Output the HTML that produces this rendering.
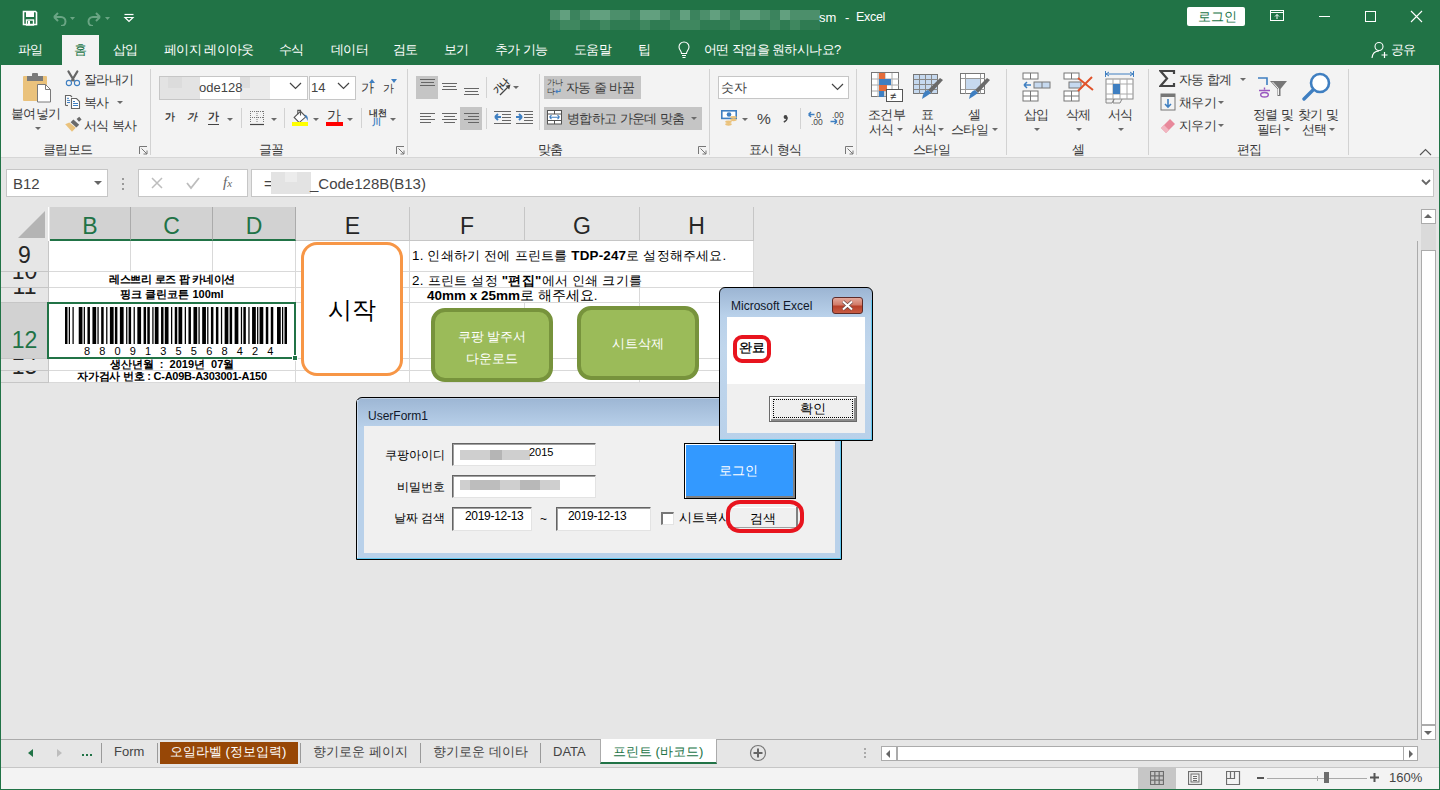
<!DOCTYPE html>
<html><head><meta charset="utf-8">
<style>
*{box-sizing:border-box;margin:0;padding:0}
html,body{width:1440px;height:790px;overflow:hidden;background:#e6e6e6;font-family:"Liberation Sans",sans-serif;font-size:12px;color:#444}
.a{position:absolute}
.t{position:absolute;white-space:nowrap;line-height:1}
#title{left:0;top:0;width:1440px;height:65px;background:#217346}
#ribbon{left:1px;top:65px;width:1438px;height:93px;background:#f3f3f3;border-bottom:1px solid #d6d6d6}
#fbar{left:1px;top:158px;width:1438px;height:49px;background:#e6e6e6}
.wt{color:#fff;font-size:13px;letter-spacing:-0.6px}
.sep{position:absolute;width:1px;background:#d2d2d2}
.grp{font-size:12px;color:#444}
.arr{position:absolute;width:0;height:0;border-left:3px solid transparent;border-right:3px solid transparent;border-top:3px solid #6a6a6a}
</style></head><body>
<div id="title" class="a"></div>
<!-- left/right/bottom window border -->
<div class="a" style="left:0;top:65px;width:1px;height:725px;background:#217346"></div>
<div class="a" style="left:1439px;top:65px;width:1px;height:725px;background:#217346"></div>
<div class="a" style="left:0;top:789px;width:1440px;height:1px;background:#217346"></div>

<!-- QAT -->
<svg class="a" style="left:22px;top:10px" width="16" height="16" viewBox="0 0 16 16"><path d="M1.5 1.5h12l1 1v12h-13z" fill="none" stroke="#fff" stroke-width="1.6"/><rect x="4" y="2" width="8" height="5" fill="#fff"/><rect x="4.5" y="10" width="7" height="5" fill="none" stroke="#fff" stroke-width="1.4"/><rect x="6" y="11" width="2" height="3" fill="#fff"/></svg>
<svg class="a" style="left:51px;top:10px" width="26" height="16" viewBox="0 0 26 16"><path d="M3 7 L7 3 M3 7 L7 11 M3 7 H10 A4.5 4.5 0 0 1 10 16" fill="none" stroke="#6aa584" stroke-width="2"/><path d="M19 7h5l-2.5 3z" fill="#6aa584"/></svg>
<svg class="a" style="left:86px;top:10px" width="26" height="16" viewBox="0 0 26 16"><path d="M14 7 L10 3 M14 7 L10 11 M14 7 H7 A4.5 4.5 0 0 0 7 16" fill="none" stroke="#6aa584" stroke-width="2"/><path d="M19 7h5l-2.5 3z" fill="#6aa584"/></svg>
<svg class="a" style="left:123px;top:12px" width="12" height="12" viewBox="0 0 12 12"><path d="M1.5 2.5h9" stroke="#fff" stroke-width="1.2"/><path d="M2 5.5 L6 9.5 L10 5.5 Z" fill="none" stroke="#fff" stroke-width="1.2"/></svg>
<!-- title text -->
<div class="a" style="left:550px;top:10px;width:10px;height:10px;background:#4c8f6b"></div>
<div class="a" style="left:550px;top:20px;width:10px;height:10px;background:#2f7b52"></div>
<div class="a" style="left:560px;top:10px;width:10px;height:10px;background:#62a07f"></div>
<div class="a" style="left:560px;top:20px;width:10px;height:10px;background:#3f875f"></div>
<div class="a" style="left:570px;top:10px;width:10px;height:10px;background:#3b835d"></div>
<div class="a" style="left:570px;top:20px;width:10px;height:10px;background:#3f875f"></div>
<div class="a" style="left:580px;top:10px;width:10px;height:10px;background:#4c8f6b"></div>
<div class="a" style="left:580px;top:20px;width:10px;height:10px;background:#2f7b52"></div>
<div class="a" style="left:590px;top:10px;width:10px;height:10px;background:#62a07f"></div>
<div class="a" style="left:590px;top:20px;width:10px;height:10px;background:#2f7b52"></div>
<div class="a" style="left:600px;top:10px;width:10px;height:10px;background:#62a07f"></div>
<div class="a" style="left:600px;top:20px;width:10px;height:10px;background:#3f875f"></div>
<div class="a" style="left:610px;top:10px;width:10px;height:10px;background:#4c8f6b"></div>
<div class="a" style="left:610px;top:20px;width:10px;height:10px;background:#2f7b52"></div>
<div class="a" style="left:620px;top:10px;width:10px;height:10px;background:#4c8f6b"></div>
<div class="a" style="left:620px;top:20px;width:10px;height:10px;background:#2f7b52"></div>
<div class="a" style="left:630px;top:10px;width:10px;height:10px;background:#3b835d"></div>
<div class="a" style="left:630px;top:20px;width:10px;height:10px;background:#2f7b52"></div>
<div class="a" style="left:640px;top:10px;width:10px;height:10px;background:#62a07f"></div>
<div class="a" style="left:640px;top:20px;width:10px;height:10px;background:#3f875f"></div>
<div class="a" style="left:650px;top:10px;width:10px;height:10px;background:#62a07f"></div>
<div class="a" style="left:650px;top:20px;width:10px;height:10px;background:#2f7b52"></div>
<div class="a" style="left:660px;top:10px;width:10px;height:10px;background:#4c8f6b"></div>
<div class="a" style="left:660px;top:20px;width:10px;height:10px;background:#2f7b52"></div>
<div class="a" style="left:670px;top:10px;width:10px;height:10px;background:#3b835d"></div>
<div class="a" style="left:670px;top:20px;width:10px;height:10px;background:#3f875f"></div>
<div class="a" style="left:680px;top:10px;width:10px;height:10px;background:#62a07f"></div>
<div class="a" style="left:680px;top:20px;width:10px;height:10px;background:#3f875f"></div>
<div class="a" style="left:690px;top:10px;width:10px;height:10px;background:#3b835d"></div>
<div class="a" style="left:690px;top:20px;width:10px;height:10px;background:#3f875f"></div>
<div class="a" style="left:700px;top:10px;width:10px;height:10px;background:#4c8f6b"></div>
<div class="a" style="left:700px;top:20px;width:10px;height:10px;background:#2f7b52"></div>
<div class="a" style="left:710px;top:10px;width:10px;height:10px;background:#62a07f"></div>
<div class="a" style="left:710px;top:20px;width:10px;height:10px;background:#2f7b52"></div>
<div class="a" style="left:720px;top:10px;width:10px;height:10px;background:#4c8f6b"></div>
<div class="a" style="left:720px;top:20px;width:10px;height:10px;background:#2f7b52"></div>
<div class="a" style="left:730px;top:10px;width:10px;height:10px;background:#3b835d"></div>
<div class="a" style="left:730px;top:20px;width:10px;height:10px;background:#3f875f"></div>
<div class="a" style="left:740px;top:10px;width:10px;height:10px;background:#62a07f"></div>
<div class="a" style="left:740px;top:20px;width:10px;height:10px;background:#2f7b52"></div>
<div class="a" style="left:750px;top:10px;width:10px;height:10px;background:#62a07f"></div>
<div class="a" style="left:750px;top:20px;width:10px;height:10px;background:#2f7b52"></div>
<div class="a" style="left:760px;top:10px;width:10px;height:10px;background:#4c8f6b"></div>
<div class="a" style="left:760px;top:20px;width:10px;height:10px;background:#2f7b52"></div>
<div class="a" style="left:770px;top:10px;width:10px;height:10px;background:#3b835d"></div>
<div class="a" style="left:770px;top:20px;width:10px;height:10px;background:#3f875f"></div>
<div class="a" style="left:780px;top:10px;width:10px;height:10px;background:#62a07f"></div>
<div class="a" style="left:780px;top:20px;width:10px;height:10px;background:#2f7b52"></div>
<div class="a" style="left:790px;top:10px;width:10px;height:10px;background:#4c8f6b"></div>
<div class="a" style="left:790px;top:20px;width:10px;height:10px;background:#3f875f"></div>
<div class="a" style="left:800px;top:10px;width:10px;height:10px;background:#4c8f6b"></div>
<div class="a" style="left:800px;top:20px;width:10px;height:10px;background:#2f7b52"></div>
<div class="a" style="left:810px;top:10px;width:10px;height:10px;background:#4c8f6b"></div>
<div class="a" style="left:810px;top:20px;width:10px;height:10px;background:#2f7b52"></div>
<div class="t" style="left:819px;top:11px;font-size:13px;color:#fff">sm</div><div class="t" style="left:845px;top:11px;font-size:13px;color:#fff">-</div><div class="t" style="left:856px;top:11px;font-size:12.5px;color:#fff;letter-spacing:-0.3px">Excel</div>
<!-- login -->
<div class="a" style="left:1187px;top:7px;width:58px;height:19px;background:#fff;border-radius:2px"></div>
<div class="t" style="left:1198px;top:10px;font-size:13px;color:#217346">로그인</div>
<svg class="a" style="left:1270px;top:10px" width="15" height="12" viewBox="0 0 15 12"><rect x="0.5" y="0.5" width="13" height="10" fill="none" stroke="#fff"/><path d="M1 2.5h12.5" stroke="#fff"/><path d="M7 9V4.5M5 6.5l2-2 2 2" fill="none" stroke="#fff"/></svg>
<div class="a" style="left:1319px;top:16px;width:11px;height:1px;background:#fff"></div>
<div class="a" style="left:1365px;top:11px;width:11px;height:11px;border:1px solid #fff"></div>
<svg class="a" style="left:1410px;top:10px" width="13" height="13" viewBox="0 0 13 13"><path d="M1 1L12 12M12 1L1 12" stroke="#fff" stroke-width="1.1"/></svg>
<!-- tabs -->
<div class="a" style="left:62px;top:35px;width:37px;height:30px;background:#f3f3f3"></div>
<div class="t wt" style="left:18px;top:43px">파일</div>
<div class="t" style="left:74px;top:43px;font-size:13px;color:#217346">홈</div>
<div class="t wt" style="left:113px;top:43px">삽입</div>
<div class="t wt" style="left:164px;top:43px">페이지 레이아웃</div>
<div class="t wt" style="left:279px;top:43px">수식</div>
<div class="t wt" style="left:331px;top:43px">데이터</div>
<div class="t wt" style="left:393px;top:43px">검토</div>
<div class="t wt" style="left:444px;top:43px">보기</div>
<div class="t wt" style="left:495px;top:43px">추가 기능</div>
<div class="t wt" style="left:574px;top:43px">도움말</div>
<div class="t wt" style="left:638px;top:43px">팁</div>
<svg class="a" style="left:677px;top:41px" width="14" height="18" viewBox="0 0 14 18"><path d="M4.5 12.5C4.5 10 2 9 2 6A5 5 0 0 1 12 6C12 9 9.5 10 9.5 12.5Z" fill="none" stroke="#fff" stroke-width="1.1"/><path d="M5 14.5h4M5.5 16.5h3" stroke="#fff" stroke-width="1.1"/></svg>
<div class="t wt" style="left:704px;top:43px">어떤 작업을 원하시나요?</div>
<svg class="a" style="left:1371px;top:41px" width="18" height="18" viewBox="0 0 18 18"><circle cx="8" cy="5.5" r="4" fill="none" stroke="#fff" stroke-width="1.1"/><path d="M1 17C1.5 12 4 10 8 10" fill="none" stroke="#fff" stroke-width="1.1"/><path d="M13.5 11v6M10.5 14h6" stroke="#fff" stroke-width="1.2"/></svg>
<div class="t wt" style="left:1391px;top:43px">공유</div>
<div id="ribbon" class="a"></div>

<!-- ===== RIBBON ===== -->
<style>
.rt{position:absolute;white-space:nowrap;line-height:1;font-size:13px;letter-spacing:-0.6px;color:#3a3a3a;margin-top:0px}
.lau{position:absolute;width:9px;height:9px}
</style>
<!-- separators -->
<div class="sep" style="left:150px;top:69px;height:86px"></div>
<div class="sep" style="left:407px;top:69px;height:86px"></div>
<div class="sep" style="left:709px;top:69px;height:86px"></div>
<div class="sep" style="left:856px;top:69px;height:86px"></div>
<div class="sep" style="left:1006px;top:69px;height:86px"></div>
<div class="sep" style="left:1148px;top:69px;height:86px"></div>
<div class="sep" style="left:1348px;top:69px;height:86px"></div>
<!-- launchers -->
<svg class="lau" style="left:139px;top:146px" viewBox="0 0 9 9"><path d="M0.5 8V0.5H8" fill="none" stroke="#777"/><path d="M2.5 2.5L8 8M8 4.5V8H4.5" fill="none" stroke="#777"/></svg>
<svg class="lau" style="left:396px;top:146px" viewBox="0 0 9 9"><path d="M0.5 8V0.5H8" fill="none" stroke="#777"/><path d="M2.5 2.5L8 8M8 4.5V8H4.5" fill="none" stroke="#777"/></svg>
<svg class="lau" style="left:698px;top:146px" viewBox="0 0 9 9"><path d="M0.5 8V0.5H8" fill="none" stroke="#777"/><path d="M2.5 2.5L8 8M8 4.5V8H4.5" fill="none" stroke="#777"/></svg>
<svg class="lau" style="left:845px;top:146px" viewBox="0 0 9 9"><path d="M0.5 8V0.5H8" fill="none" stroke="#777"/><path d="M2.5 2.5L8 8M8 4.5V8H4.5" fill="none" stroke="#777"/></svg>
<!-- group labels -->
<div class="rt" style="left:43px;top:143px">클립보드</div>
<div class="rt" style="left:259px;top:143px">글꼴</div>
<div class="rt" style="left:538px;top:143px">맞춤</div>
<div class="rt" style="left:749px;top:143px">표시 형식</div>
<div class="rt" style="left:913px;top:143px">스타일</div>
<div class="rt" style="left:1072px;top:143px">셀</div>
<div class="rt" style="left:1237px;top:143px">편집</div>
<svg class="a" style="left:1419px;top:148px" width="13" height="8" viewBox="0 0 13 8"><path d="M1 7L6.5 1.5L12 7" fill="none" stroke="#555" stroke-width="1.1"/></svg>

<!-- Clipboard -->
<svg class="a" style="left:22px;top:72px" width="31" height="31" viewBox="0 0 31 31">
<rect x="1" y="4" width="24" height="25" rx="1" fill="#eac27c"/>
<rect x="5" y="4" width="16" height="5" fill="#7a7a7a"/><rect x="10" y="1" width="6" height="4" rx="1" fill="#7a7a7a"/>
<path d="M15.5 12.5h8l5 5v12.5h-13z" fill="#fff" stroke="#7a7a7a"/><path d="M23.5 12.5v5h5" fill="none" stroke="#7a7a7a"/>
</svg>
<div class="rt" style="left:11px;top:107px">붙여넣기</div>
<div class="arr" style="left:35px;top:127px"></div>
<svg class="a" style="left:62px;top:68px" width="22" height="22" viewBox="0 0 22 22"><path d="M6.4 3.4L11.8 12.4M15.4 3.4L10 12.4" stroke="#666" stroke-width="2.1" stroke-linecap="round"/><circle cx="6.9" cy="15" r="2.6" fill="none" stroke="#3f7fc1" stroke-width="1.1"/><circle cx="15" cy="15" r="2.6" fill="none" stroke="#3f7fc1" stroke-width="1.1"/></svg>
<div class="rt" style="left:84px;top:73px">잘라내기</div>
<svg class="a" style="left:64px;top:94px" width="17" height="16" viewBox="0 0 17 16"><path d="M1.5 11.5V1.5H6.5L8 3" fill="#fff" stroke="#666" stroke-width="1.1"/><path d="M1.5 11.5H4" stroke="#666" stroke-width="1.1"/><path d="M3 4.3h2M3 6.4h3M3 8.5h3" stroke="#3f7fc1" stroke-width="1"/><path d="M7.5 4.5H12.5L15.5 7.5V14.5H7.5Z" fill="#fff" stroke="#666" stroke-width="1.1"/><path d="M9 7.5h2M9 9.5h5M9 11.5h5" stroke="#3f7fc1" stroke-width="1"/></svg>
<div class="rt" style="left:84px;top:96px">복사</div>
<div class="arr" style="left:117px;top:101px"></div>
<svg class="a" style="left:62px;top:114px" width="22" height="22" viewBox="0 0 22 22"><path d="M3.2 10.3L7.3 8.5L13.8 13.7L10 17.7Z" fill="#eac27c"/><path d="M8.6 8.2L11.4 5.6L17.2 10.8L14.4 13.4Z" fill="#6a6a6a"/><path d="M14.6 5L17.2 2.8L19.6 5.4L17 7.8Z" fill="#6a6a6a"/></svg>
<div class="rt" style="left:84px;top:119px">서식 복사</div>

<!-- Font group -->
<div class="a" style="left:159px;top:76px;width:149px;height:24px;background:#fff;border:1px solid #c6c6c6"></div>
<div class="a" style="left:160px;top:77px;width:40px;height:22px;background:#e3e3e3"></div>
<div class="a" style="left:168px;top:77px;width:14px;height:11px;background:#dcdcdc"></div>
<div class="a" style="left:240px;top:77px;width:30px;height:22px;background:#ebebeb"></div>
<div class="a" style="left:240px;top:77px;width:10px;height:11px;background:#dedede"></div>
<div class="t" style="left:199px;top:81px;font-size:13px;color:#444">ode128</div>
<svg class="a" style="left:289px;top:82px" width="13" height="8" viewBox="0 0 13 8"><path d="M1 1L6.5 6.5L12 1" fill="none" stroke="#444" stroke-width="1.2"/></svg>
<div class="a" style="left:309px;top:76px;width:47px;height:24px;background:#fff;border:1px solid #c6c6c6"></div>
<div class="t" style="left:311px;top:81px;font-size:13px;color:#444">14</div>
<svg class="a" style="left:337px;top:82px" width="13" height="8" viewBox="0 0 13 8"><path d="M1 1L6.5 6.5L12 1" fill="none" stroke="#444" stroke-width="1.2"/></svg>
<div class="rt" style="left:361px;top:81px;font-size:13px">가</div>
<svg class="a" style="left:369px;top:79px" width="6" height="4"><path d="M0 4L3 0L6 4Z" fill="#3f7fc1"/></svg>
<div class="rt" style="left:383px;top:83px;font-size:11px">가</div>
<svg class="a" style="left:391px;top:79px" width="6" height="4"><path d="M0 0L3 4L6 0Z" fill="#3f7fc1"/></svg>
<div class="rt" style="left:165px;top:112px;font-size:10px;font-weight:bold">가</div>
<div class="rt" style="left:187px;top:112px;font-size:10px;font-style:italic;font-weight:bold">가</div>
<div class="rt" style="left:208px;top:111px;font-size:11px;font-weight:bold">가</div>
<div class="a" style="left:208px;top:124px;width:11px;height:1px;background:#444"></div>
<div class="arr" style="left:227px;top:118px"></div>
<div class="sep" style="left:241px;top:108px;height:20px"></div>



<svg class="a" style="left:250px;top:110px" width="15" height="16" viewBox="0 0 15 16"><path d="M0.5 1v12M13.5 1v12M7 1v12M0 1.5h14M0 7.5h14" stroke="#777" stroke-dasharray="1 1"/><path d="M0 14.5h14" stroke="#444" stroke-width="1.2"/></svg><div class="arr" style="left:271px;top:118px"></div>
<div class="sep" style="left:284px;top:108px;height:20px"></div>
<svg class="a" style="left:288px;top:106px" width="24" height="24" viewBox="0 0 24 24"><path d="M6.2 11.4L12.5 5.3L17.8 10.8L11.2 16.6Z" fill="#fff" stroke="#555" stroke-width="1.1"/><path d="M9.8 8.2V4.4H12.5V9.6" fill="none" stroke="#555" stroke-width="1.1"/><path d="M16.5 8.5Q21 9.5 19.5 15Q18.5 12 17.5 11Z" fill="#3f7fc1"/><rect x="4" y="16" width="16" height="4" fill="#ffff00"/></svg>
<div class="arr" style="left:313px;top:118px"></div>
<div class="rt" style="left:327px;top:108px;font-size:14px">가</div>
<div class="a" style="left:326px;top:122px;width:17px;height:4px;background:#ff0000"></div>
<div class="arr" style="left:347px;top:118px"></div>
<div class="sep" style="left:361px;top:108px;height:20px"></div>
<div class="rt" style="left:369px;top:109px;font-size:9px;font-weight:bold;letter-spacing:-0.5px">내천</div>
<div class="t" style="left:372px;top:118px;font-size:9px;color:#3f7fc1;font-weight:bold">川</div>
<div class="arr" style="left:390px;top:118px"></div>

<!-- Alignment -->
<div class="a" style="left:416px;top:76px;width:22px;height:23px;background:#c5c5c5"></div>
<div class="a" style="left:460px;top:107px;width:22px;height:23px;background:#c5c5c5"></div><svg class="a" style="left:410px;top:70px" width="130" height="65"><path d="M10 9.5H25 M11 12.5H24 M10 15.5H25 M32 13.5H47 M33 16.5H46 M32 19.5H47 M54 18.5H69 M55 21.5H68 M54 24.5H69 M10 43.5H25 M32 43.5H47 M54 43.5H69 M10 46.5H21 M34 46.5H45 M58 46.5H69 M10 49.5H25 M32 49.5H47 M54 49.5H69 M10 52.5H21 M34 52.5H45 M58 52.5H69 M84 41.5H101 M84 53.5H101 M92 44.5H101 M92 47.5H101 M92 50.5H101 M106 41.5H123 M106 53.5H123 M114 44.5H123 M114 47.5H123 M114 50.5H123" stroke="#666" stroke-width="1.2"/>
<path d="M85 47h6M85 47l3-3M85 47l3 3" fill="none" stroke="#3f7fc1" stroke-width="2"/>
<path d="M106 47h6M112 47l-3-3M112 47l-3 3" fill="none" stroke="#3f7fc1" stroke-width="2"/></svg><div class="sep" style="left:486px;top:77px;height:21px"></div>
<div class="t" style="left:493px;top:82px;font-size:9px;color:#3a3a3a;transform:rotate(-45deg);transform-origin:50% 50%;font-weight:bold;letter-spacing:-0.5px">가나</div>
<svg class="a" style="left:498px;top:83px" width="14" height="14" viewBox="0 0 14 14"><path d="M2 12L11.5 2.5" stroke="#444" stroke-width="1.2"/><path d="M12.5 1.5L7.5 2.8L11.2 6.5Z" fill="#444"/></svg>
<div class="arr" style="left:513px;top:86px;border-left-width:3.5px;border-right-width:3.5px;border-top-width:3.5px"></div>
<div class="sep" style="left:539px;top:74px;height:56px"></div>
<div class="a" style="left:544px;top:76px;width:97px;height:23px;background:#c5c5c5"></div>
<div class="t" style="left:547px;top:78px;font-size:8px;color:#3a3a3a;line-height:9px;letter-spacing:-0.3px">가나<br>다<span style="color:#3f7fc1;font-weight:bold">↵</span></div>
<div class="rt" style="left:566px;top:81px">자동 줄 바꿈</div>




<div class="sep" style="left:486px;top:108px;height:21px"></div>


<div class="a" style="left:544px;top:107px;width:158px;height:23px;background:#c5c5c5"></div>
<svg class="a" style="left:547px;top:110px" width="16" height="16" viewBox="0 0 16 16"><rect x="0.5" y="0.5" width="14" height="13.5" fill="#fff" stroke="#555"/><path d="M1 4h14M1 10.5h14M7.5 0.5v3.5M7.5 10.5v3.5" stroke="#555"/><path d="M2.5 7.2h10M2.5 7.2l2-2M2.5 7.2l2 2M12.5 7.2l-2-2M12.5 7.2l-2 2" fill="none" stroke="#3f7fc1" stroke-width="1.1"/></svg>
<div class="rt" style="left:567px;top:112px">병합하고 가운데 맞춤</div>
<div class="arr" style="left:691px;top:117px"></div>

<!-- Number -->
<div class="a" style="left:718px;top:76px;width:131px;height:23px;background:#fff;border:1px solid #c6c6c6"></div>
<div class="t" style="left:721px;top:81px;font-size:13px;color:#444">숫자</div>
<svg class="a" style="left:831px;top:83px" width="13" height="8" viewBox="0 0 13 8"><path d="M1 1L6.5 6.5L12 1" fill="none" stroke="#444" stroke-width="1.2"/></svg>

<div class="arr" style="left:742px;top:118px"></div>


<div class="sep" style="left:800px;top:108px;height:21px"></div>
<svg class="a" style="left:716px;top:104px" width="140" height="28" viewBox="0 0 140 28">
<rect x="5.8" y="6.8" width="14.4" height="7.6" fill="#fff" stroke="#3f7fc1" stroke-width="1.6"/>
<circle cx="13" cy="10.5" r="2.3" fill="#3f7fc1"/>
<ellipse cx="17.5" cy="13.3" rx="3.3" ry="1.4" fill="#eac27c"/><ellipse cx="17.5" cy="15.8" rx="3.3" ry="1.4" fill="#eac27c"/>
<ellipse cx="12.5" cy="17.8" rx="3.3" ry="1.4" fill="#eac27c"/><ellipse cx="12.5" cy="20.3" rx="3.3" ry="1.4" fill="#eac27c"/>
<text x="41" y="20" font-family="Liberation Sans" font-size="15.5" fill="#444">%</text>
<circle cx="69.5" cy="13" r="1.9" fill="#444"/><path d="M71.2 13.2Q71.2 16.5 67.8 18" fill="none" stroke="#444" stroke-width="1.4"/>
<path d="M92.5 10.5h6M92.5 10.5l2.5-2.5M92.5 10.5l2.5 2.5" fill="none" stroke="#3f7fc1" stroke-width="1.5"/>
<text x="98" y="13.5" font-family="Liberation Sans" font-size="8.5" fill="#444">.0</text>
<text x="95" y="20.5" font-family="Liberation Sans" font-size="8.5" fill="#444">.00</text>
<text x="116" y="13.5" font-family="Liberation Sans" font-size="8.5" fill="#444">.00</text>
<path d="M114.5 17.5h6.5M121 17.5l-2.5-2.5M121 17.5l-2.5 2.5" fill="none" stroke="#3f7fc1" stroke-width="1.5"/>
<text x="120.5" y="20.5" font-family="Liberation Sans" font-size="8.5" fill="#444">.0</text>
</svg>



<!-- Styles -->
<svg class="a" style="left:871px;top:72px" width="33" height="31" viewBox="0 0 33 31">
<rect x="0.5" y="0.5" width="27" height="24" fill="#fff" stroke="#777"/>
<path d="M7 1v24M14 1v24M21 1v24M1 7h27M1 13h27M1 19h27" stroke="#aaa"/>
<rect x="8" y="1" width="6" height="6" fill="#e46c3a"/><rect x="8" y="7" width="12" height="6" fill="#3f7fc1"/><rect x="8" y="13" width="8" height="6" fill="#e46c3a"/><rect x="8" y="19" width="5" height="6" fill="#3f7fc1"/>
<rect x="15.5" y="17.5" width="16" height="12" fill="#fff" stroke="#555"/><text x="19" y="28" font-size="11" fill="#333">≠</text>
</svg>
<div class="rt" style="left:868px;top:108px">조건부</div>
<div class="rt" style="left:869px;top:123px">서식</div>
<div class="arr" style="left:897px;top:128px"></div>
<svg class="a" style="left:913px;top:72px" width="32" height="31" viewBox="0 0 32 31">
<rect x="0.5" y="2.5" width="24" height="19" fill="#c6d9ef" stroke="#777"/>
<path d="M6.5 3v19M12.5 3v19M18.5 3v19M1 7.5h24M1 12.5h24M1 17.5h24" stroke="#888"/>
<path d="M30 8L18 21L15 18L27 6Z" fill="#6a6a6a"/><path d="M15 18Q10 19 9 27Q14 24 18 21Z" fill="#3f7fc1"/>
</svg>
<div class="rt" style="left:921px;top:108px">표</div>
<div class="rt" style="left:912px;top:123px">서식</div>
<div class="arr" style="left:938px;top:128px"></div>
<svg class="a" style="left:960px;top:72px" width="32" height="31" viewBox="0 0 32 31">
<rect x="0.5" y="1.5" width="24" height="20" fill="#fff" stroke="#777"/>
<path d="M1 6.5h24M1 17.5h24M5.5 2v20M20.5 2v20" stroke="#999"/><rect x="6" y="7" width="14" height="10" fill="#c6d9ef"/>
<path d="M30 8L18 21L15 18L27 6Z" fill="#6a6a6a"/><path d="M15 18Q10 19 9 27Q14 24 18 21Z" fill="#3f7fc1"/>
</svg>
<div class="rt" style="left:968px;top:108px">셀</div>
<div class="rt" style="left:951px;top:123px">스타일</div>
<div class="arr" style="left:992px;top:128px"></div>

<!-- Cells -->
<svg class="a" style="left:1022px;top:72px" width="29" height="30" viewBox="0 0 29 30">
<rect x="1" y="1" width="15" height="6" fill="#fff" stroke="#777"/><path d="M8.5 1v6" stroke="#777"/>
<rect x="12" y="10" width="16" height="6" fill="#c6d9ef" stroke="#777"/><path d="M20 10v6" stroke="#777"/>
<path d="M2 13h7M2 13l3-3M2 13l3 3" fill="none" stroke="#3f7fc1" stroke-width="1.5"/>
<rect x="1" y="19" width="15" height="10" fill="#fff" stroke="#777"/><path d="M8.5 19v10M1 24h15" stroke="#777"/>
</svg>
<div class="rt" style="left:1024px;top:108px">삽입</div>
<div class="arr" style="left:1034px;top:128px"></div>
<svg class="a" style="left:1063px;top:72px" width="31" height="30" viewBox="0 0 31 30">
<rect x="1" y="1" width="15" height="6" fill="#fff" stroke="#777"/><path d="M8.5 1v6" stroke="#777"/>
<rect x="6" y="10" width="12" height="6" fill="#c6d9ef" stroke="#777"/>
<rect x="1" y="19" width="15" height="10" fill="#fff" stroke="#777"/><path d="M8.5 19v10M1 24h15" stroke="#777"/>
<path d="M15 6L30 18M29 5L15 19" stroke="#e0522a" stroke-width="2"/>
</svg>
<div class="rt" style="left:1066px;top:108px">삭제</div>
<div class="arr" style="left:1076px;top:128px"></div>
<svg class="a" style="left:1105px;top:71px" width="30" height="33" viewBox="0 0 30 33">
<path d="M1 3h27M1 3l3-2M1 3l3 2M28 3l-3-2M28 3l-3 2M0.5 0v6M28.5 0v6" fill="none" stroke="#3f7fc1"/>
<rect x="1" y="8" width="27" height="20" fill="#fff" stroke="#888"/>
<path d="M8 8v20M15 8v20M22 8v20M1 13h27M1 23h27" stroke="#aaa"/>
<rect x="8" y="13" width="7" height="10" fill="#3f7fc1"/>
<path d="M1 28v4h6l2-4M9 28l-1 4h7l2-4" fill="none" stroke="#888"/>
</svg>
<div class="rt" style="left:1108px;top:108px">서식</div>
<div class="arr" style="left:1118px;top:128px"></div>

<!-- Editing -->
<svg class="a" style="left:1159px;top:70px" width="17" height="17" viewBox="0 0 17 17"><path d="M15 4V1H1.5L8 8.5L1.5 16H15V13" fill="none" stroke="#444" stroke-width="2.2"/></svg>
<div class="rt" style="left:1179px;top:73px">자동 합계</div>
<div class="arr" style="left:1240px;top:78px"></div>
<svg class="a" style="left:1160px;top:93px" width="16" height="18" viewBox="0 0 16 18"><rect x="1" y="1" width="14" height="3" fill="#777"/><rect x="1" y="1" width="14" height="16" fill="none" stroke="#777"/><path d="M8 6v8M5 11l3 3 3-3" fill="none" stroke="#3f7fc1" stroke-width="1.6"/></svg>
<div class="rt" style="left:1179px;top:96px">채우기</div>
<div class="arr" style="left:1218px;top:101px"></div>
<svg class="a" style="left:1160px;top:117px" width="16" height="16" viewBox="0 0 16 16"><path d="M1 11L10 2L15 7L6 16Z" fill="#e8899b"/><path d="M1 11L4 8L9 13L6 16Z" fill="#f1b5c0"/></svg>
<div class="rt" style="left:1179px;top:119px">지우기</div>
<div class="arr" style="left:1218px;top:124px"></div>
<svg class="a" style="left:1252px;top:70px" width="40" height="30" viewBox="0 0 40 30"><path d="M6 8H15V15" fill="none" stroke="#3f7fc1" stroke-width="1.6"/><path d="M12.5 17.5v2M7 20.5h11" stroke="#9b59c0" stroke-width="1.4"/><ellipse cx="12.5" cy="24.7" rx="3.8" ry="2.3" fill="none" stroke="#9b59c0" stroke-width="1.5"/><path d="M18 11H35L28.5 19V26H25.5V19Z" fill="#777"/><path d="M20.5 12L26.5 18.5V25" fill="none" stroke="#fff" stroke-width="0.9"/></svg>
<div class="rt" style="left:1253px;top:108px">정렬 및</div>
<div class="rt" style="left:1257px;top:123px">필터</div>
<div class="arr" style="left:1284px;top:128px"></div>
<svg class="a" style="left:1302px;top:71px" width="31" height="31" viewBox="0 0 31 31"><circle cx="18" cy="12" r="9" fill="#fff" stroke="#3f7fc1" stroke-width="2.6"/><path d="M11 19L2 28" stroke="#3f7fc1" stroke-width="3.4" stroke-linecap="round"/></svg>
<div class="rt" style="left:1298px;top:108px">찾기 및</div>
<div class="rt" style="left:1302px;top:123px">선택</div>
<div class="arr" style="left:1329px;top:128px"></div>
<div id="fbar" class="a"></div>

<!-- ===== FORMULA BAR ===== -->
<div class="a" style="left:6px;top:169px;width:102px;height:28px;background:#fff;border:1px solid #c6c6c6"></div>
<div class="t" style="left:13px;top:176px;font-size:15px;color:#444">B12</div>
<div class="a" style="left:94px;top:181px;width:0;height:0;border-left:4px solid transparent;border-right:4px solid transparent;border-top:4px solid #666"></div>
<div class="a" style="left:122px;top:178px;width:2px;height:2px;background:#999"></div>
<div class="a" style="left:122px;top:183px;width:2px;height:2px;background:#999"></div>
<div class="a" style="left:122px;top:188px;width:2px;height:2px;background:#999"></div>
<div class="a" style="left:138px;top:169px;width:110px;height:28px;background:#fff;border:1px solid #c6c6c6"></div>
<svg class="a" style="left:150px;top:176px" width="14" height="14"><path d="M2 2L12 12M12 2L2 12" stroke="#bdbdbd" stroke-width="1.5"/></svg>
<svg class="a" style="left:185px;top:176px" width="16" height="14"><path d="M2 7L6 12L14 2" fill="none" stroke="#bdbdbd" stroke-width="1.8"/></svg>
<div class="t" style="left:223px;top:175px;font-family:'Liberation Serif',serif;font-style:italic;font-size:15px;color:#666">f<span style="font-size:11px">x</span></div>
<div class="a" style="left:251px;top:169px;width:1183px;height:28px;background:#fff;border:1px solid #c6c6c6"></div>
<div class="t" style="left:264px;top:176px;font-size:15px;color:#444">=</div>
<div class="a" style="left:271px;top:172px;width:40px;height:22px;background:#e3e3e3"></div>
<div class="a" style="left:285px;top:172px;width:12px;height:10px;background:#ececec"></div>
<div class="t" style="left:310px;top:176px;font-size:15px;color:#444">_Code128B(B13)</div>
<svg class="a" style="left:1421px;top:179px" width="10" height="7"><path d="M1 1L5 5L9 1" fill="none" stroke="#666" stroke-width="1.8"/></svg>

<!-- ===== SHEET ===== -->
<style>
.ch{position:absolute;top:207px;height:34px;padding-top:2px;background:#e6e6e6;border-right:1px solid #c6c6c6;border-bottom:1px solid #c6c6c6;text-align:center;font-size:23px;line-height:34px;color:#262626}
.ch.sel{background:#d2d2d2;color:#217346;border-right-color:#ababab;border-bottom:2px solid #217346}
.rh{position:absolute;left:1px;width:48px;background:#e6e6e6;border-right:1px solid #c6c6c6;border-bottom:1px solid #c6c6c6;overflow:hidden}
.rh span{position:absolute;left:0;width:47px;text-align:center;font-size:23px;line-height:23px;color:#262626}
.rh.sel{background:#d2d2d2}
.rh.sel span{color:#217346}
.gl{position:absolute;background:#d9d9d9}
.ct{position:absolute;white-space:nowrap;line-height:1;color:#000}
</style>
<div class="a" style="left:1px;top:207px;width:48px;height:34px;background:#e6e6e6;border-right:1px solid #fff"></div>
<svg class="a" style="left:18px;top:211px" width="28" height="28"><path d="M27 0V27H0Z" fill="#b4b4b4"/></svg>

<div class="ch sel" style="left:50px;width:81px">B</div>
<div class="ch sel" style="left:131px;width:82px">C</div>
<div class="ch sel" style="left:213px;width:83px">D</div>
<div class="ch" style="left:296px;width:114px">E</div>
<div class="ch" style="left:410px;width:115px">F</div>
<div class="ch" style="left:525px;width:115px">G</div>
<div class="ch" style="left:640px;width:114px">H</div>
<div class="a" style="left:49px;top:241px;width:705px;height:142px;background:#fff"></div>
<div class="gl" style="left:49px;top:271px;width:705px;height:1px"></div>
<div class="gl" style="left:49px;top:287px;width:705px;height:1px"></div>
<div class="gl" style="left:49px;top:302px;width:705px;height:1px"></div>
<div class="gl" style="left:49px;top:358px;width:705px;height:1px"></div>
<div class="gl" style="left:49px;top:370px;width:705px;height:1px"></div>
<div class="gl" style="left:49px;top:382px;width:705px;height:1px"></div>
<div class="gl" style="left:130px;top:241px;width:1px;height:30px"></div>
<div class="gl" style="left:212px;top:241px;width:1px;height:30px"></div>
<div class="gl" style="left:295px;top:241px;width:1px;height:142px"></div>
<div class="gl" style="left:409px;top:241px;width:1px;height:142px"></div>
<div class="gl" style="left:524px;top:302px;width:1px;height:81px"></div>
<div class="gl" style="left:639px;top:287px;width:1px;height:96px"></div>
<div class="gl" style="left:753px;top:241px;width:1px;height:142px"></div>
<div class="rh" style="top:241px;height:31px"><span style="top:3px">9</span></div>
<div class="rh" style="top:272px;height:16px"><span style="top:-12px">10</span></div>
<div class="rh" style="top:288px;height:15px"><span style="top:-13px">11</span></div>
<div class="rh sel" style="top:303px;height:56px"><span style="top:26px">12</span></div>
<div class="rh" style="top:359px;height:12px"><span style="top:-18px">14</span></div>
<div class="rh" style="top:371px;height:12px"><span style="top:-16px">15</span></div>

<div class="ct" style="left:49px;width:246px;text-align:center;top:274px;font-size:11px;font-weight:bold;letter-spacing:-0.3px">레스쁘리 로즈 팝 카네이션</div>
<div class="ct" style="left:49px;width:246px;text-align:center;top:289px;font-size:11px;font-weight:bold">핑크 클린코튼 100ml</div>
<svg class="a" style="left:65px;top:307px" width="222" height="37" viewBox="0 0 222 37"><path d="M0.00 0h2.49v37h-2.49z M3.74 0h1.25v37h-1.25z M7.48 0h1.25v37h-1.25z M13.72 0h3.74v37h-3.74z M18.71 0h1.25v37h-1.25z M22.45 0h2.49v37h-2.49z M27.44 0h3.74v37h-3.74z M32.43 0h1.25v37h-1.25z M36.17 0h2.49v37h-2.49z M41.16 0h1.25v37h-1.25z M44.90 0h3.74v37h-3.74z M49.89 0h2.49v37h-2.49z M54.88 0h3.74v37h-3.74z M61.11 0h1.25v37h-1.25z M63.61 0h2.49v37h-2.49z M68.60 0h1.25v37h-1.25z M72.34 0h3.74v37h-3.74z M78.57 0h2.49v37h-2.49z M82.31 0h2.49v37h-2.49z M87.30 0h1.25v37h-1.25z M89.80 0h3.74v37h-3.74z M96.03 0h2.49v37h-2.49z M99.78 0h3.74v37h-3.74z M106.01 0h1.25v37h-1.25z M109.75 0h2.49v37h-2.49z M113.49 0h3.74v37h-3.74z M119.73 0h1.25v37h-1.25z M123.47 0h2.49v37h-2.49z M128.46 0h3.74v37h-3.74z M133.45 0h1.25v37h-1.25z M137.19 0h3.74v37h-3.74z M142.18 0h1.25v37h-1.25z M145.92 0h2.49v37h-2.49z M150.91 0h2.49v37h-2.49z M155.90 0h1.25v37h-1.25z M159.64 0h3.74v37h-3.74z M164.63 0h2.49v37h-2.49z M169.62 0h3.74v37h-3.74z M175.85 0h1.25v37h-1.25z M178.35 0h2.49v37h-2.49z M183.34 0h1.25v37h-1.25z M187.08 0h3.74v37h-3.74z M192.07 0h1.25v37h-1.25z M194.56 0h3.74v37h-3.74z M200.80 0h2.49v37h-2.49z M205.79 0h2.49v37h-2.49z M212.02 0h3.74v37h-3.74z M217.01 0h1.25v37h-1.25z M219.51 0h2.49v37h-2.49z" fill="#000"/></svg>
<div class="ct" style="left:84px;top:346px;font-size:11px;letter-spacing:9.15px;color:#000">8809135568424</div>
<div class="ct" style="left:49px;width:246px;text-align:center;top:359px;font-size:11px;font-weight:bold">생산년월 &nbsp;: &nbsp;2019년 &nbsp;07월</div>
<div class="ct" style="left:49px;width:246px;text-align:center;top:371px;font-size:11px;font-weight:bold;letter-spacing:-0.25px">자가검사 번호 : C-A09B-A303001-A150</div>
<div class="a" style="left:47px;top:302px;width:249px;height:57px;border:2px solid #217346"></div>
<div class="a" style="left:292px;top:355px;width:6px;height:6px;background:#217346;border:1px solid #fff"></div>
<div class="ct" style="left:412px;top:249px;font-size:13.4px;letter-spacing:0.2px">1. 인쇄하기 전에 프린트를 <b>TDP-247</b>로 설정해주세요.</div>
<div class="ct" style="left:412px;top:274px;font-size:13.4px;letter-spacing:0.25px">2. 프린트 설정 <b>"편집"</b>에서 인쇄 크기를</div>
<div class="ct" style="left:427px;top:289px;font-size:13.5px"><b>40mm x 25mm</b>로 해주세요.</div>
<!-- shapes -->
<div class="a" style="left:301px;top:242px;width:102px;height:134px;border:3.5px solid #f79646;border-radius:16px;background:#fff"></div>
<div class="ct" style="left:301px;width:102px;text-align:center;top:298px;font-size:24px;color:#000">시작</div>
<div class="a" style="left:431px;top:308px;width:122px;height:74px;border:4px solid #77933c;border-radius:14px;background:#9bbb59"></div>
<div class="ct" style="left:431px;width:122px;text-align:center;top:326px;font-size:13px;color:#fff;line-height:22px">쿠팡 발주서<br>다운로드</div>
<div class="a" style="left:577px;top:306px;width:122px;height:74px;border:4px solid #77933c;border-radius:14px;background:#9bbb59"></div>
<div class="ct" style="left:577px;width:122px;text-align:center;top:337px;font-size:13px;color:#fff">시트삭제</div>



<!-- ===== SHEET FRAME / SCROLLBARS ===== -->
<div class="a" style="left:1417px;top:241px;width:1px;height:499px;background:#ababab"></div>
<div class="a" style="left:1px;top:739px;width:1417px;height:1px;background:#ababab"></div>
<div class="a" style="left:1421px;top:209px;width:15px;height:15px;background:#fff;border:1px solid #ababab"></div>
<div class="a" style="left:1424px;top:214px;width:0;height:0;border-left:4.5px solid transparent;border-right:4.5px solid transparent;border-bottom:4px solid #666"></div>
<div class="a" style="left:1421px;top:224px;width:15px;height:26px;background:#dadada"></div>
<div class="a" style="left:1421px;top:250px;width:15px;height:475px;background:#fff;border:1px solid #ababab"></div>
<div class="a" style="left:1421px;top:725px;width:15px;height:15px;background:#fff;border:1px solid #ababab"></div>
<div class="a" style="left:1424px;top:731px;width:0;height:0;border-left:4.5px solid transparent;border-right:4.5px solid transparent;border-top:4px solid #666"></div>
<!-- h scroll -->
<div class="a" style="left:881px;top:746px;width:16px;height:15px;background:#fff;border:1px solid #ababab"></div>
<div class="a" style="left:886px;top:750px;width:0;height:0;border-top:4px solid transparent;border-bottom:4px solid transparent;border-right:4px solid #666"></div>
<div class="a" style="left:897px;top:746px;width:507px;height:15px;background:#fff;border:1px solid #ababab"></div>
<div class="a" style="left:1403px;top:746px;width:15px;height:15px;background:#fff;border:1px solid #ababab"></div>
<div class="a" style="left:1409px;top:750px;width:0;height:0;border-top:4px solid transparent;border-bottom:4px solid transparent;border-left:4px solid #666"></div>
<div class="a" style="left:864px;top:748px;width:2px;height:2px;background:#aaa"></div>
<div class="a" style="left:864px;top:752px;width:2px;height:2px;background:#aaa"></div>
<div class="a" style="left:864px;top:756px;width:2px;height:2px;background:#aaa"></div>

<!-- ===== SHEET TABS ===== -->
<div class="a" style="left:1px;top:767px;width:1438px;height:1px;background:#c6c6c6"></div>
<div class="a" style="left:1px;top:768px;width:1438px;height:21px;background:#f3f3f3"></div>
<div class="a" style="left:28px;top:749px;width:0;height:0;border-top:4px solid transparent;border-bottom:4px solid transparent;border-right:5px solid #217346"></div>
<div class="a" style="left:57px;top:749px;width:0;height:0;border-top:4px solid transparent;border-bottom:4px solid transparent;border-left:5px solid #bdbdbd"></div>
<div class="a" style="left:82px;top:754px;width:2px;height:2px;background:#217346;box-shadow:4px 0 0 #217346,8px 0 0 #217346"></div>
<div class="a" style="left:101px;top:743px;width:1px;height:20px;background:#9a9a9a"></div>
<div class="t" style="left:114px;top:745px;font-size:13px;color:#444">Form</div>
<div class="a" style="left:157px;top:743px;width:1px;height:20px;background:#9a9a9a"></div>
<div class="a" style="left:160px;top:742px;width:138px;height:22px;background:#974706"></div>
<div class="t" style="left:170px;top:745px;font-size:13px;color:#fff">오일라벨 (정보입력)</div>
<div class="a" style="left:300px;top:743px;width:1px;height:20px;background:#9a9a9a"></div>
<div class="t" style="left:313px;top:745px;font-size:13px;color:#444">향기로운 페이지</div>
<div class="a" style="left:420px;top:743px;width:1px;height:20px;background:#9a9a9a"></div>
<div class="t" style="left:433px;top:745px;font-size:13px;color:#444">향기로운 데이타</div>
<div class="a" style="left:540px;top:743px;width:1px;height:20px;background:#9a9a9a"></div>
<div class="t" style="left:553px;top:745px;font-size:13px;color:#444">DATA</div>
<div class="a" style="left:600px;top:739px;width:117px;height:25px;background:#fff;border-left:1px solid #ababab;border-right:1px solid #ababab;border-bottom:2px solid #217346"></div>
<div class="t" style="left:613px;top:745px;font-size:13px;color:#217346">프린트 (바코드)</div>
<svg class="a" style="left:749px;top:744px" width="18" height="18"><circle cx="9" cy="9" r="7.5" fill="none" stroke="#777" stroke-width="1.2"/><path d="M9 4.5v9M4.5 9h9" stroke="#666" stroke-width="2"/></svg>

<!-- ===== STATUS BAR ===== -->
<div class="a" style="left:1138px;top:768px;width:38px;height:21px;background:#c6c6c6"></div>
<svg class="a" style="left:1150px;top:771px" width="14" height="14"><path d="M0.5 0.5h13v13h-13z M0.5 4.83h13 M0.5 9.17h13 M4.83 0.5v13 M9.17 0.5v13" fill="none" stroke="#6d6d6d" stroke-width="1.2"/></svg>
<svg class="a" style="left:1188px;top:771px" width="15" height="14"><rect x="0.5" y="0.5" width="13" height="13" fill="none" stroke="#6d6d6d" stroke-width="1.2"/><rect x="3" y="3" width="8" height="8" fill="none" stroke="#6d6d6d"/><path d="M5 5.5h4M5 7.5h4M5 9.5h4" stroke="#6d6d6d"/></svg>
<svg class="a" style="left:1226px;top:771px" width="15" height="14"><path d="M0.5 0.5h13v13h-13z M0.5 7.5h8v-7 M4.5 0.5v7" fill="none" stroke="#6d6d6d" stroke-width="1.2"/></svg>
<div class="a" style="left:1257px;top:777px;width:7px;height:2px;background:#555"></div>
<div class="a" style="left:1267px;top:778px;width:100px;height:1px;background:#aaa"></div>
<div class="a" style="left:1317px;top:776px;width:1px;height:5px;background:#aaa"></div>
<div class="a" style="left:1324px;top:772px;width:5px;height:11px;background:#6d6d6d"></div>
<svg class="a" style="left:1370px;top:773px" width="9" height="9"><path d="M4.5 0v9M0 4.5h9" stroke="#555" stroke-width="2"/></svg>
<div class="t" style="left:1389px;top:771px;font-size:13px;color:#444">160%</div>

<!-- ===== USERFORM ===== -->
<div class="a" style="left:356px;top:397px;width:486px;height:163px;border:1px solid #000;border-radius:6px 6px 0 0;background:linear-gradient(#9db6d4,#b9d1ea 30px,#b9d1ea);box-shadow:inset 0 0 0 1px rgba(255,255,255,.35)"></div>
<div class="a" style="left:357px;top:400px;width:1px;height:158px;background:linear-gradient(#c5d8ee,#e0ecf8)"></div>
<div class="a" style="left:840px;top:440px;width:1px;height:119px;background:#62c8f0"></div><div class="a" style="left:357px;top:558px;width:484px;height:1px;background:#62c8f0"></div>
<div class="t" style="left:368px;top:410px;font-size:12px;color:#10182a">UserForm1</div>
<div class="a" style="left:364px;top:426px;width:471px;height:127px;background:#f0f0f0"></div>
<div class="t" style="left:300px;width:145px;text-align:right;top:449px;font-size:12px;color:#000">쿠팡아이디</div>
<div class="t" style="left:300px;width:145px;text-align:right;top:481px;font-size:12px;color:#000">비밀번호</div>
<div class="t" style="left:300px;width:145px;text-align:right;top:512px;font-size:12px;color:#000">날짜 검색</div>
<style>.tb{position:absolute;background:#fff;border-top:1px solid #646464;border-left:1px solid #646464;border-right:1px solid #e3e3e3;border-bottom:1px solid #e3e3e3;box-shadow:inset 1px 1px 0 #a0a0a0}</style>
<div class="tb" style="left:452px;top:443px;width:144px;height:23px"></div>
<div class="a" style="left:460px;top:450px;width:70px;height:10px;background:#cfcfcf"></div>
<div class="a" style="left:490px;top:450px;width:12px;height:10px;background:#b5b5b5"></div>
<div class="t" style="left:529px;top:447px;font-size:11px;color:#000">2015</div>
<div class="tb" style="left:452px;top:475px;width:144px;height:23px"></div>
<div class="a" style="left:460px;top:480px;width:100px;height:10px;background:#cfcfcf"></div>
<div class="a" style="left:470px;top:480px;width:30px;height:10px;background:#bdbdbd"></div>
<div class="a" style="left:520px;top:480px;width:20px;height:10px;background:#b8b8b8"></div>
<div class="tb" style="left:452px;top:507px;width:80px;height:24px"></div>
<div class="t" style="left:465px;top:510px;font-size:12px;letter-spacing:-0.3px;color:#000">2019-12-13</div>
<div class="t" style="left:540px;top:513px;font-size:12px;color:#000">~</div>
<div class="tb" style="left:556px;top:507px;width:95px;height:24px"></div>
<div class="t" style="left:568px;top:510px;font-size:12px;letter-spacing:-0.3px;color:#000">2019-12-13</div>
<div class="a" style="left:661px;top:512px;width:13px;height:13px;background:#fff;border-top:2px solid #777;border-left:2px solid #777;border-right:1px solid #e3e3e3;border-bottom:1px solid #e3e3e3"></div>
<div class="t" style="left:679px;top:512px;font-size:12.5px;color:#000">시트복사</div>
<div class="a" style="left:684px;top:443px;width:112px;height:56px;border:1px solid #000;background:#3399ff;box-shadow:inset 1px 1px 0 #fff,inset -2px -2px 0 #808080"></div>
<div class="t" style="left:682px;top:464px;width:112px;text-align:center;font-size:13px;color:#fff">로그인</div>
<div class="a" style="left:728px;top:507px;width:70px;height:21px;background:#f0f0f0;border-right:2px solid #808080;border-bottom:1px solid #a0a0a0;box-shadow:inset 1px 1px 0 #fff"></div>
<div class="t" style="left:729px;top:513px;width:68px;text-align:center;font-size:12.5px;color:#000">검색</div>
<div class="a" style="left:726px;top:500px;width:78px;height:33px;border:4px solid #e8141e;border-radius:14px/13px"></div>

<!-- ===== MSGBOX ===== -->
<div class="a" style="left:719px;top:287px;width:154px;height:154px;border:1px solid #000;border-radius:6px 6px 0 0;background:linear-gradient(#9cb5d3,#b9d1ea 28px,#c0d6ec 60px,#b9d1ea)"></div>
<div class="t" style="left:731px;top:300px;font-size:12px;color:#10182a">Microsoft Excel</div>
<div class="a" style="left:832px;top:297px;width:31px;height:17px;border:1px solid #5e2b28;border-radius:3px;background:linear-gradient(#e4a99c,#d27b69 45%,#b8402a 55%,#c85c44)"></div>
<svg class="a" style="left:840px;top:300px" width="15" height="11"><path d="M3 1.5L12 9.5M12 1.5L3 9.5" stroke="#6b4a48" stroke-width="3.4"/><path d="M3 1.5L12 9.5M12 1.5L3 9.5" stroke="#fff" stroke-width="2"/></svg>
<div class="a" style="left:727px;top:317px;width:138px;height:67px;background:#fff"></div>
<div class="a" style="left:727px;top:384px;width:138px;height:49px;background:#f0f0f0"></div>
<div class="t" style="left:739px;top:342px;font-size:12.5px;color:#000;-webkit-text-stroke:0.3px #000">완료</div>
<div class="a" style="left:733px;top:335px;width:38px;height:28px;border:4.5px solid #e8141e;border-radius:9px"></div>
<div class="a" style="left:769px;top:396px;width:88px;height:26px;border:1px solid #6a6a6a;background:#efefef;box-shadow:inset 1px 1px 0 #fff,inset -2px -2px 0 #8a8a8a"></div>
<div class="a" style="left:773px;top:399px;width:80px;height:19px;border:1px dotted #000"></div>
<div class="t" style="left:769px;top:403px;width:88px;text-align:center;font-size:12.5px;color:#000">확인</div><div class="a" style="left:871px;top:300px;width:1px;height:140px;background:#62c8f0"></div><div class="a" style="left:720px;top:439px;width:152px;height:1px;background:#62c8f0"></div>

</body></html>
